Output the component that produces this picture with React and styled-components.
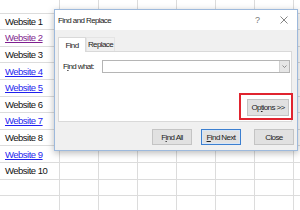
import React from "react";
import styled, { createGlobalStyle } from "styled-components";

const GlobalStyle = createGlobalStyle`
  html, body {
    margin: 0;
    padding: 0;
    background: #ffffff;
    overflow: hidden;
  }
  body {
    width: 300px;
    height: 210px;
    font-family: "Liberation Sans", Arial, sans-serif;
    white-space: nowrap;
  }
`;

const Page = styled.div`
  position: relative;
  width: 300px;
  height: 210px;
  overflow: hidden;
`;

const Sheet = styled.div`
  display: grid;
  grid-template-columns: 60px repeat(7, 39px);
  grid-auto-rows: 16.6px;
  margin-top: -3px;
`;

const Cell = styled.div`
  box-sizing: border-box;
  border-right: 1px solid #dcdcdc;
  border-bottom: 1px solid #dcdcdc;
  display: flex;
  align-items: center;
  padding-left: 5px;
  font-size: 9.5px;
  letter-spacing: -0.5px;
  color: ${(p) => (p.$link === "visited" ? "#7f1f8f" : p.$link ? "#1f1fee" : "#111")};
  text-decoration: ${(p) => (p.$link ? "underline" : "none")};
  text-underline-offset: 1px;
`;

const Dialog = styled.div`
  position: absolute;
  left: 54px;
  top: 9px;
  width: 244px;
  height: 142px;
  box-sizing: border-box;
  border: 1px solid #9db9dc;
  background: #f0f0f0;
  box-shadow: 0 2px 7px rgba(0, 0, 0, 0.28);
  display: flex;
  flex-direction: column;
  font-size: 8px;
  letter-spacing: -0.6px;
  color: #222;
`;

const TitleBar = styled.div`
  height: 20px;
  background: #ffffff;
  display: flex;
  align-items: center;
  padding: 0 9px 0 3px;
`;

const Title = styled.span`
  flex: 1;
`;

const HelpMark = styled.span`
  color: #777;
  font-size: 9px;
  letter-spacing: 0;
  margin-right: 20px;
`;

const Body = styled.div`
  flex: 1;
  display: flex;
  flex-direction: column;
  padding: 7px 2px 0 3px;
`;

const Tabs = styled.div`
  display: flex;
  height: 14px;
`;

const Tab = styled.div`
  box-sizing: border-box;
  width: ${(p) => p.$w}px;
  display: flex;
  align-items: center;
  justify-content: center;
  background: ${(p) => (p.$active ? "#ffffff" : "#f0f0f0")};
  border: 1px solid ${(p) => (p.$active ? "#d9d9d9" : "#e4e4e4")};
  border-bottom: none;
  margin-bottom: ${(p) => (p.$active ? -1 : 0)}px;
  position: relative;
  z-index: ${(p) => (p.$active ? 1 : 0)};
`;

const Panel = styled.div`
  box-sizing: border-box;
  height: 71px;
  margin-right: 3px;
  background: #ffffff;
  border: 1px solid #d9d9d9;
  display: flex;
  flex-direction: column;
  padding: 8px 1px 4px 4px;
`;

const FieldRow = styled.div`
  display: flex;
  align-items: center;
`;

const Label = styled.span`
  width: 39px;
`;

const Combo = styled.div`
  flex: 1;
  height: 13px;
  box-sizing: border-box;
  border: 1px solid #b5b5b5;
  display: flex;
  align-items: stretch;
  justify-content: flex-end;
  background: #fff;
`;

const Caret = styled.span`
  width: 9px;
  background: #e6e6e6;
  border-left: 1px solid #d0d0d0;
  display: flex;
  align-items: center;
  justify-content: center;
`;

const OptionsRow = styled.div`
  margin-top: auto;
  display: flex;
  justify-content: flex-end;
`;

const Highlight = styled.div`
  border: 2px solid #e0242f;
  padding: 4px 2px 2px 6px;
  margin-right: -3px;
  margin-bottom: -3px;
`;

const Button = styled.button`
  box-sizing: border-box;
  width: ${(p) => p.$w || 40}px;
  height: ${(p) => p.$h || 16}px;
  margin: 0;
  margin-left: ${(p) => p.$ml || 0}px;
  padding: 0;
  background: #e1e1e1;
  border: 1px solid ${(p) => (p.$primary ? "#3c7fd0" : "#c4c4c4")};
  box-shadow: ${(p) => (p.$primary ? "inset 0 0 0 1px #d7e6f7" : "none")};
  font-family: inherit;
  font-size: inherit;
  letter-spacing: inherit;
  white-space: nowrap;
  color: #222;
`;

const Footer = styled.div`
  display: flex;
  justify-content: flex-end;
  margin-top: 7px;
  padding-right: 1px;
`;

const rows = [
  { text: "" },
  { text: "Website 1" },
  { text: "Website 2", link: "visited" },
  { text: "Website 3" },
  { text: "Website 4", link: true },
  { text: "Website 5", link: true },
  { text: "Website 6" },
  { text: "Website 7", link: true },
  { text: "Website 8" },
  { text: "Website 9", link: true },
  { text: "Website 10" },
  { text: "" },
  { text: "" },
];

export default function App() {
  return (
    <Page>
      <GlobalStyle />
      <Sheet>
        {rows.map((r, i) => (
          <React.Fragment key={i}>
            <Cell $link={r.link}>{r.text}</Cell>
            {Array.from({ length: 7 }).map((_, j) => (
              <Cell key={j} />
            ))}
          </React.Fragment>
        ))}
      </Sheet>

      <Dialog>
        <TitleBar>
          <Title>Find and Replace</Title>
          <HelpMark>?</HelpMark>
          <svg width="8" height="8" viewBox="0 0 8 8">
            <path d="M0.5 0.5 L7.5 7.5 M7.5 0.5 L0.5 7.5" stroke="#666" strokeWidth="0.8" fill="none" />
          </svg>
        </TitleBar>
        <Body>
          <Tabs>
            <Tab $active $w={28}>Find</Tab>
            <Tab $w={29}>Replace</Tab>
          </Tabs>
          <Panel>
            <FieldRow>
              <Label>
                F<u>i</u>nd what:
              </Label>
              <Combo>
                <Caret>
                  <svg width="5" height="3" viewBox="0 0 5 3">
                    <path d="M0.5 0.5 L2.5 2.5 L4.5 0.5" fill="none" stroke="#777" strokeWidth="0.8" />
                  </svg>
                </Caret>
              </Combo>
            </FieldRow>
            <OptionsRow>
              <Highlight>
                <Button $w={42} $h={17}>
                  Op<u>t</u>ions &gt;&gt;
                </Button>
              </Highlight>
            </OptionsRow>
          </Panel>
          <Footer>
            <Button>
              F<u>i</u>nd All
            </Button>
            <Button $primary $ml={9}>
              <u>F</u>ind Next
            </Button>
            <Button $ml={13}>Close</Button>
          </Footer>
        </Body>
      </Dialog>
    </Page>
  );
}
